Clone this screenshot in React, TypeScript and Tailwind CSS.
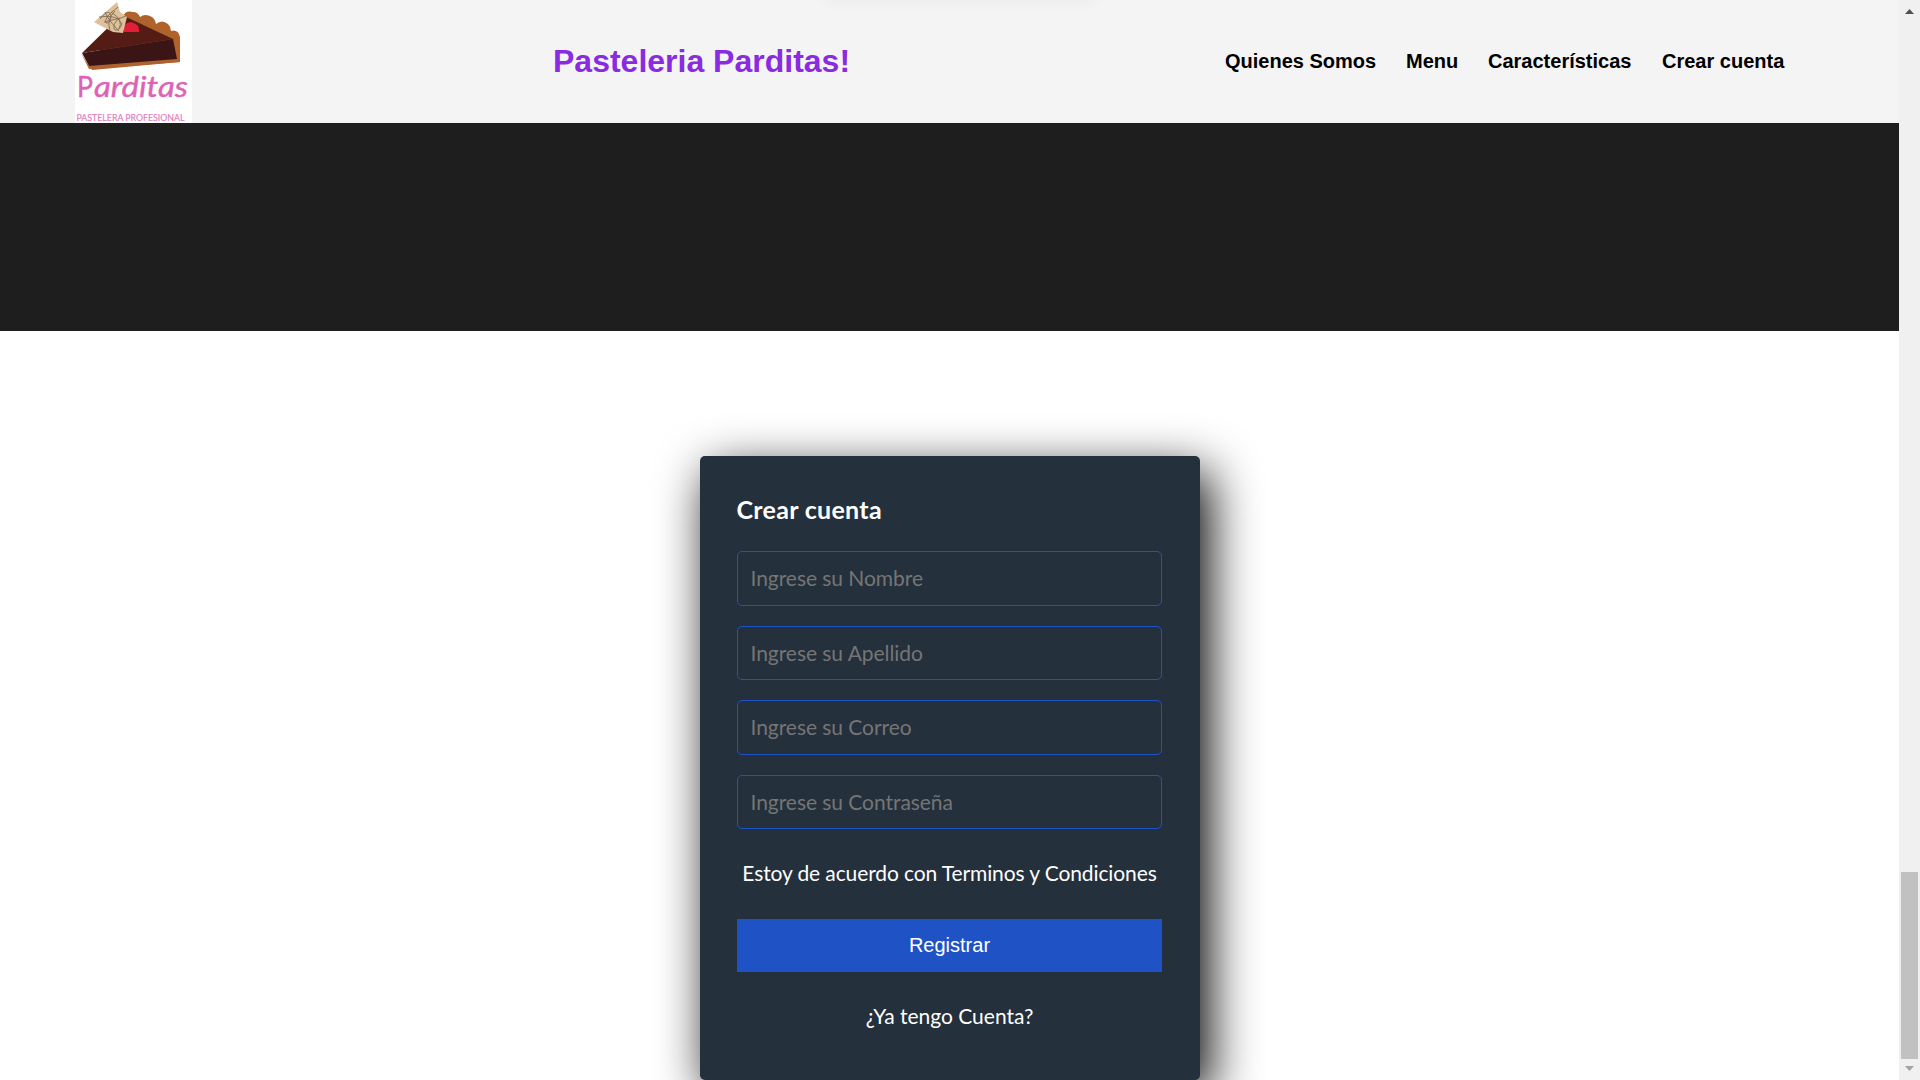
import React from "react";

const navItems = [
  { label: "Quienes Somos", width: "w-[151px]" },
  { label: "Menu", width: "w-[52px]" },
  { label: "Características", width: "w-[144px]" },
  { label: "Crear cuenta", width: "w-[124px]" },
];

const fields = [
  { placeholder: "Ingrese su Nombre", type: "text" },
  { placeholder: "Ingrese su Apellido", type: "text" },
  { placeholder: "Ingrese su Correo", type: "email" },
  { placeholder: "Ingrese su Contraseña", type: "password" },
];

function Logo() {
  return (
    <svg viewBox="0 0 117 123" className="block h-[123px] w-[117px] shrink-0 overflow-visible bg-white">
      <path d="M48 17Q50 10 58 12Q63 12 65 17Q70 13 77 17Q80 19 81 24Q87 19 93 24Q96 27 96 31Q103 29 105 37V62L17 70L14 65Z" fill="#b0622b" />
      <path d="M7 53L46 15L49 16L98 39Z" fill="#541c14" />
      <path d="M6 53L14 69L105 62L101 58L14 66Z" fill="#ae632e" />
      <path d="M7 53L98 39L102 59L14 66Z" fill="#3b1516" />
      <path d="M49 32Q47 23 56 22Q65 24 64 32Z" fill="#e21f36" />
      <path d="M19 22L42 2L45 12L52 17L48 33L38 32L28 27Z" fill="#dec29c" />
      <path d="M25 19Q32 9 36 14Q36 24 31 23Q28 18 43 7M30 12Q33 20 44 31M24 17Q43 14 47 24Q43 33 39 29Q37 20 51 16M29 22L45 18M36 12Q49 20 44 29M35 30Q31 20 40 11" fill="none" stroke="#836b52" strokeWidth="0.9" />
      <text x="2" y="96.5" textLength="16" lengthAdjust="spacingAndGlyphs" className="fill-[#dc63b5] font-[Lato] text-[28px]" stroke="#dc63b5" strokeWidth="0.4">P</text>
      <text x="19" y="96.5" textLength="94" lengthAdjust="spacingAndGlyphs" className="fill-[#dc63b5] font-[Lato] text-[28px] italic" stroke="#dc63b5" strokeWidth="0.4">arditas</text>
      <text x="1.5" y="120.5" textLength="108" lengthAdjust="spacingAndGlyphs" className="fill-[#df7fc0] font-[Lato] text-[10px]" stroke="#df7fc0" strokeWidth="0.2">PASTELERA PROFESIONAL</text>
    </svg>
  );
}

function Header() {
  return (
    <header className="flex h-[123px] items-center bg-[#f4f4f4] pl-[75px] font-['Liberation_Sans',sans-serif]">
      <Logo />
      <h1 className="ml-[361px] w-[672px] whitespace-nowrap pb-[2px] text-[32px] font-bold leading-none text-[#8a2be2]">Pasteleria Parditas!</h1>
      <nav className="flex gap-[30px] pb-[2px]">
        {navItems.map((n) => (
          <a key={n.label} className={"whitespace-nowrap text-[20px] font-bold leading-6 text-black " + n.width}>{n.label}</a>
        ))}
      </nav>
    </header>
  );
}

function RegisterForm() {
  return (
    <form className="h-[624px] w-[500px] rounded-[5px] bg-[#24303c] pl-[37px] pr-[38px] pt-[35px] font-[Lato,sans-serif] text-white shadow-[9px_16px_50px_#000]">
      <h4 className="mb-[24.1px] h-9 whitespace-nowrap text-[25px] font-bold leading-9 tracking-[0.3px]">Crear cuenta</h4>
      <div className="flex flex-col gap-5">
        {fields.map((f) => (
          <input key={f.placeholder} type={f.type} placeholder={f.placeholder} className="h-[54.5px] w-full rounded-[5px] border border-[#1f53c5] bg-[#24303c] px-[13px] pb-[1px] text-[21px] tracking-[-0.05px] outline-none placeholder:text-[#757575]" />
        ))}
      </div>
      <p className="mt-[23.9px] h-10 whitespace-nowrap pl-px text-center text-[21px] leading-10 tracking-[-0.11px]">Estoy de acuerdo con Terminos y Condiciones</p>
      <button type="button" className="mt-[26px] block h-[53px] w-full bg-[#1f53c5] pl-px font-['Liberation_Sans',sans-serif] text-[20px]">Registrar</button>
      <p className="mt-[24px] h-10 pl-px text-center text-[21px] leading-10">¿Ya tengo Cuenta?</p>
    </form>
  );
}

function Scrollbar() {
  return (
    <div className="flex h-full w-[21px] flex-col items-center bg-[#f0f0f0]">
      <svg viewBox="0 0 9 5" className="mt-[9px] h-[5px] w-[9px]"><path d="M4.5 0L9 5H0Z" fill="#505050" /></svg>
      <div className="mt-[858px] h-[187px] w-[17px] bg-[#c1c1c1]" />
      <svg viewBox="0 0 9 5" className="mt-[7px] h-[5px] w-[9px]"><path d="M0 0H9L4.5 5Z" fill="#a3a3a3" /></svg>
    </div>
  );
}

export default function App() {
  return (
    <div className="relative flex h-[1080px] w-[1920px] overflow-hidden bg-white">
      <div className="w-[1899px] overflow-hidden">
        <Header />
        <div className="h-[208px] bg-[#1e1e1e]" />
        <main className="flex justify-center pt-[125px]">
          <RegisterForm />
        </main>
      </div>
      <Scrollbar />
      <div className="absolute left-[825px] top-[-10px] h-[10px] w-[270px] shadow-[0_0_16px_rgba(0,0,0,0.06)]" />
    </div>
  );
}
